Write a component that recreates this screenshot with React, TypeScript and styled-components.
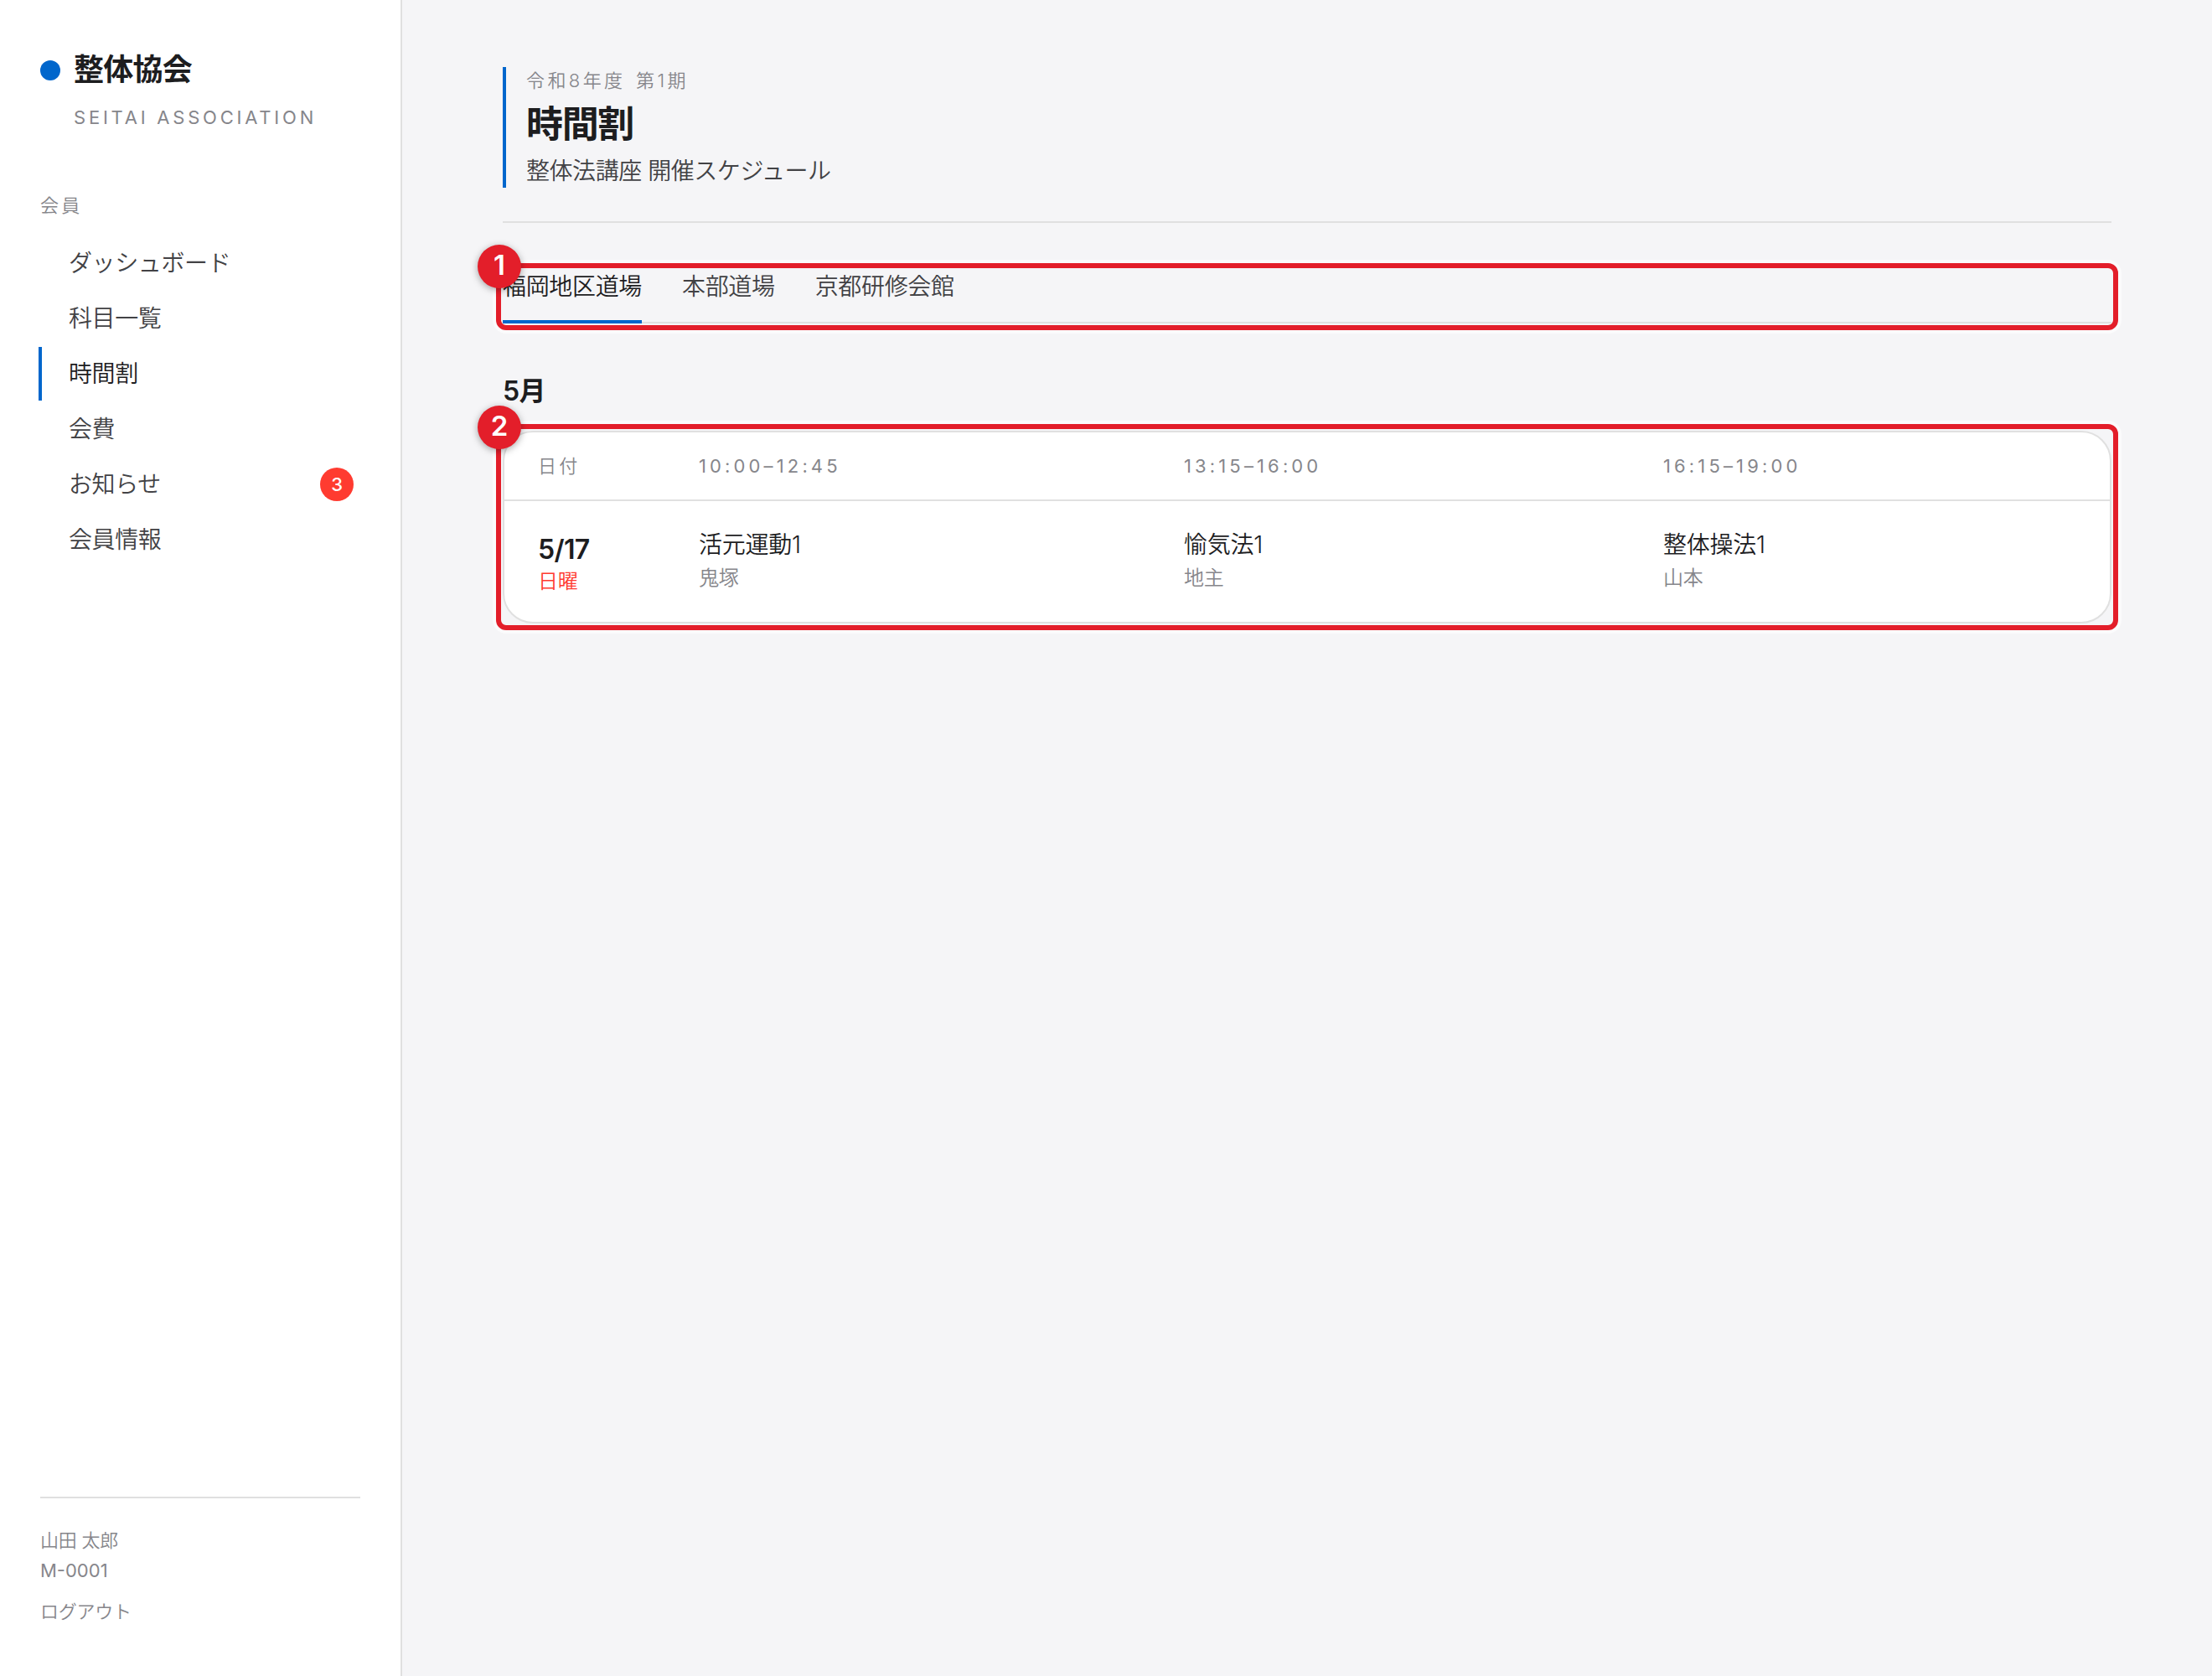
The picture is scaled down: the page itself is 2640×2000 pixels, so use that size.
import React from "react";
import styled, { createGlobalStyle } from "styled-components";

const sans = `Inter, "Noto Sans CJK JP", sans-serif`;

const Global = createGlobalStyle`
  * { box-sizing: border-box; }
  body { margin: 0; background: #f5f5f7; font-family: ${sans}; color: #1d1d1f; -webkit-font-smoothing: antialiased; }
  h1, h2, p { margin: 0; }
`;

const Page = styled.div`
  display: flex;
  width: 100%;
  min-height: 2000px;
`;

const Sidebar = styled.aside`
  display: flex;
  flex-direction: column;
  flex: none;
  width: 480px;
  padding: 56px 48px 0;
  background: #fff;
  border-right: 2px solid #e0e0e0;
`;

const Brand = styled.div`
  display: flex;
  align-items: center;
  gap: 16px;
  height: 56px;
`;

const Dot = styled.span`
  width: 24px;
  height: 24px;
  border-radius: 50%;
  background: #0066cc;
`;

const BrandName = styled.span`
  padding-bottom: 2px;
  font-size: 36px;
  font-weight: 600;
  line-height: 54px;
  letter-spacing: -0.02em;
`;

const BrandSub = styled.div`
  padding-left: 40px;
  margin-top: 12px;
  font-size: 22px;
  line-height: 32px;
  letter-spacing: 0.172em;
  color: #86868b;
`;

const NavLabel = styled.div`
  margin-top: 73px;
  font-size: 22px;
  line-height: 32px;
  letter-spacing: 0.15em;
  font-weight: 350;
  color: #86868b;
`;

const Nav = styled.nav`
  display: flex;
  flex-direction: column;
  gap: 2px;
  margin: 21px 0 0 -2px;
`;

const NavItem = styled.a<{ $active?: boolean }>`
  display: flex;
  align-items: center;
  justify-content: space-between;
  height: 64px;
  padding: 0 8px 0 32px;
  border-left: 4px solid ${(p) => (p.$active ? "#0066cc" : "transparent")};
  font-size: 28px;
  font-weight: 350;
  letter-spacing: -0.014em;
  color: ${(p) => (p.$active ? "#1d1d1f" : "#424245")};
`;

const NavText = styled.span`
  padding-bottom: 4px;
`;

const Count = styled.span`
  width: 40px;
  height: 40px;
  border-radius: 20px;
  background: #ff3b30;
  color: #fff;
  font-size: 22px;
  font-weight: 500;
  line-height: 40px;
  text-align: center;
`;

const Account = styled.footer`
  margin-top: auto;
  height: 214px;
  padding-top: 32px;
  border-top: 2px solid #e0e0e0;
  font-size: 22px;
  line-height: 36px;
  letter-spacing: -0.012em;
  color: #86868b;
  font-weight: 350;
`;

const MemberId = styled.div`
  font-weight: 400;
  letter-spacing: 0;
`;

const Logout = styled.div`
  margin-top: 13px;
`;

const Main = styled.main`
  flex: 1;
  padding: 80px 120px;
`;

const Header = styled.header`
  padding-bottom: 40px;
  border-bottom: 2px solid #e0e0e0;
`;

const Heading = styled.div`
  height: 144px;
  padding-left: 24px;
  border-left: 4px solid #0066cc;
`;

const Eyebrow = styled.p`
  font-size: 22px;
  line-height: 32px;
  letter-spacing: 0.155em;
  word-spacing: 3px;
  font-weight: 350;
  color: #86868b;
`;

const Title = styled.h1`
  margin-top: 8px;
  font-size: 44px;
  font-weight: 700;
  line-height: 56px;
  letter-spacing: -0.03em;
`;

const Lead = styled.p`
  margin-top: 8px;
  font-size: 28px;
  font-weight: 350;
  line-height: 40px;
  letter-spacing: -0.016em;
  color: #424245;
`;

const Marked = styled.section<{ $top: number }>`
  position: relative;
  margin-top: ${(p) => p.$top}px;
`;

const Frame = styled.div`
  position: absolute;
  inset: -8px;
  border: 6px solid #e31e2a;
  border-radius: 12px;
  box-shadow: 0 0 0 4px rgba(255, 255, 255, 0.6);
`;

const Marker = styled.span`
  position: absolute;
  top: -28px;
  left: -28px;
  width: 52px;
  height: 52px;
  border-radius: 50%;
  background: #e31e2a;
  box-shadow: 0 2px 8px rgba(0, 0, 0, 0.35);
  color: #fff;
  font-size: 33px;
  font-weight: 600;
  line-height: 49px;
  text-align: center;
`;

const Tabs = styled.div`
  display: flex;
  gap: 48px;
  height: 64px;
  border-bottom: 2px solid #e0e0e0;
`;

const Tab = styled.span<{ $active?: boolean }>`
  height: 64px;
  border-bottom: 4px solid ${(p) => (p.$active ? "#0066cc" : "transparent")};
  color: ${(p) => (p.$active ? "#1d1d1f" : "#424245")};
  font-size: 28px;
  font-weight: 350;
  line-height: 40px;
  letter-spacing: -0.012em;
`;

const Month = styled.h2`
  margin-top: 61px;
  font-size: 32px;
  font-weight: 600;
  line-height: 40px;
  letter-spacing: -0.02em;
`;

const Card = styled.div`
  height: 230px;
  border: 2px solid #e0e0e0;
  border-radius: 36px;
  background: #fff;
  overflow: hidden;
`;

const Row = styled.div`
  display: grid;
  grid-template-columns: 192px 579px 572px 1fr;
  padding-left: 40px;
`;

const HeadRow = styled(Row)`
  height: 82px;
  border-bottom: 2px solid #e0e0e0;
`;

const HeadCell = styled.span<{ $thin?: boolean }>`
  font-size: 22px;
  font-weight: ${(p) => (p.$thin ? 350 : 400)};
  line-height: 80px;
  letter-spacing: ${(p) => (p.$thin ? 0.15 : 0.188)}em;
  color: #86868b;
`;

const BodyRow = styled(Row)`
  padding-top: 32px;
`;

const DateText = styled.div`
  margin-top: 6px;
  font-size: 32px;
  font-weight: 600;
  line-height: 40px;
  letter-spacing: -0.02em;
`;

const Weekday = styled.div`
  font-size: 24px;
  font-weight: 350;
  line-height: 36px;
  letter-spacing: -0.012em;
  color: #ff3b30;
`;

const Subject = styled.div`
  font-size: 28px;
  font-weight: 350;
  line-height: 41px;
  letter-spacing: -0.01em;
`;

const Teacher = styled.div`
  font-size: 24px;
  font-weight: 350;
  line-height: 38px;
  letter-spacing: -0.012em;
  color: #86868b;
`;

const nav = [
  { label: "ダッシュボード" },
  { label: "科目一覧" },
  { label: "時間割", active: true },
  { label: "会費" },
  { label: "お知らせ", count: 3 },
  { label: "会員情報" },
];

const tabs = ["福岡地区道場", "本部道場", "京都研修会館"];

const slots = [
  { time: "10:00–12:45", subject: "活元運動1", teacher: "鬼塚" },
  { time: "13:15–16:00", subject: "愉気法1", teacher: "地主" },
  { time: "16:15–19:00", subject: "整体操法1", teacher: "山本" },
];

export default function App() {
  return (
    <Page lang="ja">
      <Global />
      <Sidebar>
        <Brand>
          <Dot />
          <BrandName>整体協会</BrandName>
        </Brand>
        <BrandSub>SEITAI ASSOCIATION</BrandSub>
        <NavLabel>会員</NavLabel>
        <Nav>
          {nav.map((n) => (
            <NavItem key={n.label} $active={n.active}>
              <NavText>{n.label}</NavText>
              {n.count && <Count>{n.count}</Count>}
            </NavItem>
          ))}
        </Nav>
        <Account>
          <div>山田 太郎</div>
          <MemberId>M-0001</MemberId>
          <Logout>ログアウト</Logout>
        </Account>
      </Sidebar>
      <Main>
        <Header>
          <Heading>
            <Eyebrow>令和8年度 第1期</Eyebrow>
            <Title>時間割</Title>
            <Lead>整体法講座 開催スケジュール</Lead>
          </Heading>
        </Header>
        <Marked $top={56}>
          <Tabs>
            {tabs.map((t, i) => (
              <Tab key={t} $active={i === 0}>{t}</Tab>
            ))}
          </Tabs>
          <Frame>
            <Marker>1</Marker>
          </Frame>
        </Marked>
        <Month>5月</Month>
        <Marked $top={27}>
          <Card>
            <HeadRow>
              <HeadCell $thin>日付</HeadCell>
              {slots.map((s) => (
                <HeadCell key={s.time}>{s.time}</HeadCell>
              ))}
            </HeadRow>
            <BodyRow>
              <div>
                <DateText>5/17</DateText>
                <Weekday>日曜</Weekday>
              </div>
              {slots.map((s) => (
                <div key={s.time}>
                  <Subject>{s.subject}</Subject>
                  <Teacher>{s.teacher}</Teacher>
                </div>
              ))}
            </BodyRow>
          </Card>
          <Frame>
            <Marker>2</Marker>
          </Frame>
        </Marked>
      </Main>
    </Page>
  );
}
